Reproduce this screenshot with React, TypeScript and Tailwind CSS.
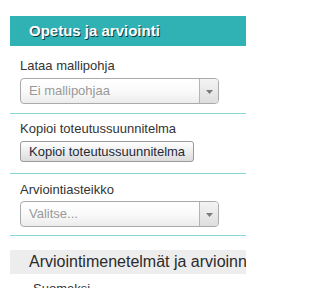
const font = { fontFamily: '"Liberation Sans", Arial, sans-serif' };

interface FakeSelectProps {
  placeholder: string;
}

const FakeSelect = ({ placeholder }: FakeSelectProps) => {
  return (
    <div className="flex h-[26px] w-[199px] overflow-hidden rounded-[4px] border border-[#aaaaaa] bg-gradient-to-b from-white via-[#fafafa] to-[#ececec]">
      <div className="flex flex-1 items-center pl-[8px] text-[13px] text-[#999999]">
        {placeholder}
      </div>
      <div className="flex w-[19px] items-center justify-center border-l border-[#b4b4b4] bg-gradient-to-b from-[#f4f4f4] to-[#dedede]">
        <svg width="7" height="4" viewBox="0 0 7 4" className="mt-[1px]">
          <path d="M0 0 L7 0 L3.5 4 Z" fill="#7a7a7a" />
        </svg>
      </div>
    </div>
  );
};

export default function App() {
  return (
    <div className="h-[288px] w-[246px] overflow-hidden bg-white text-[#333333]" style={font}>
      <div className="ml-[10px] w-[320px] pt-[16px]">
        <div className="flex h-[30px] items-center bg-[#30b2b5] pl-[19px] text-[15px] font-bold text-white [text-shadow:1px_1px_0_#0f3f42]">
          Opetus ja arviointi
        </div>

        <div className="border-b border-[#86d7d9] pb-[9px] pl-[10px] pt-[12px]">
          <div className="mb-[4px] text-[13px] leading-[16px]">Lataa mallipohja</div>
          <FakeSelect placeholder="Ei mallipohjaa" />
        </div>

        <div className="border-b border-[#86d7d9] pb-[11px] pl-[10px] pt-[7px]">
          <div className="mb-[4px] text-[13px] leading-[16px]">Kopioi toteutussuunnitelma</div>
          <div className="flex">
            <button className="h-[21px] rounded-[3px] border border-[#9a9a9a] bg-gradient-to-b from-white to-[#dcdcdc] px-[8px] text-[13px] leading-[19px] text-[#1f2a38]">
              Kopioi toteutussuunnitelma
            </button>
          </div>
        </div>

        <div className="border-b border-[#86d7d9] pb-[8px] pl-[10px] pt-[8px]">
          <div className="mb-[3px] text-[13px] leading-[16px]">Arviointiasteikko</div>
          <FakeSelect placeholder="Valitse..." />
        </div>

        <div className="mt-[14px] flex h-[24px] items-center whitespace-nowrap bg-[#ededed] pl-[19px] text-[16px] text-[#2b2b2b]">
          Arviointimenetelmät ja arvioinnin kriteerit
        </div>

        <div className="pl-[23px] pt-[7px] text-[13px] leading-[16px]">Suomeksi</div>
      </div>
    </div>
  );
}
